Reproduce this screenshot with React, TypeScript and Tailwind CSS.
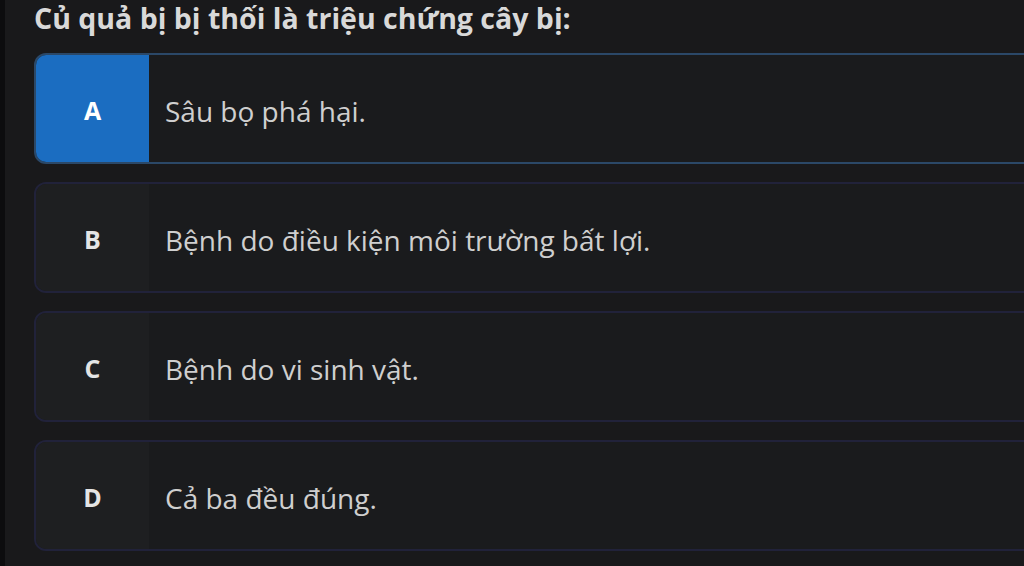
const options = [
  { key: 'A', text: 'Sâu bọ phá hại.', selected: true },
  { key: 'B', text: 'Bệnh do điều kiện môi trường bất lợi.', selected: false },
  { key: 'C', text: 'Bệnh do vi sinh vật.', selected: false },
  { key: 'D', text: 'Cả ba đều đúng.', selected: false },
]

export default function App() {
  return (
    <div
      className="flex h-[566px] w-[1024px] overflow-hidden border-l-[5px] border-[#0c0c0e] bg-[#19191b]"
      style={{ fontFamily: '"Open Sans", "Noto Sans", sans-serif' }}
    >
      <div className="flex-1 pl-[29px]">
        <h1 className="mt-[1px] text-[28.5px] leading-[34px] font-bold text-[#d9d9d9]">
          Củ quả bị bị thối là triệu chứng cây bị:
        </h1>
        <div className="mt-[18px] -mr-4 flex flex-col gap-[18px]">
          {options.map((o) => (
            <Option key={o.key} letter={o.key} text={o.text} selected={o.selected} />
          ))}
        </div>
      </div>
    </div>
  )
}

function Option({ letter, text, selected }: { letter: string; text: string; selected: boolean }) {
  return (
    <div
      className={`flex h-[111px] overflow-hidden rounded-[12px] border-2 ${
        selected ? 'border-[#2b4868] bg-[#1a1b1d]' : 'border-[#21223a] bg-[#1a1b1d]'
      }`}
    >
      <div
        className={`flex w-[113px] shrink-0 items-center justify-center pt-[4px] text-[25px] font-bold ${
          selected ? 'bg-[#1b6dc1] text-white' : 'bg-[#1e1f21] text-[#e4e4e4]'
        }`}
      >
        {letter}
      </div>
      <div className="flex items-center pt-[4px] pl-[16px] text-[28px] text-[#cfcfcf]">{text}</div>
    </div>
  )
}
